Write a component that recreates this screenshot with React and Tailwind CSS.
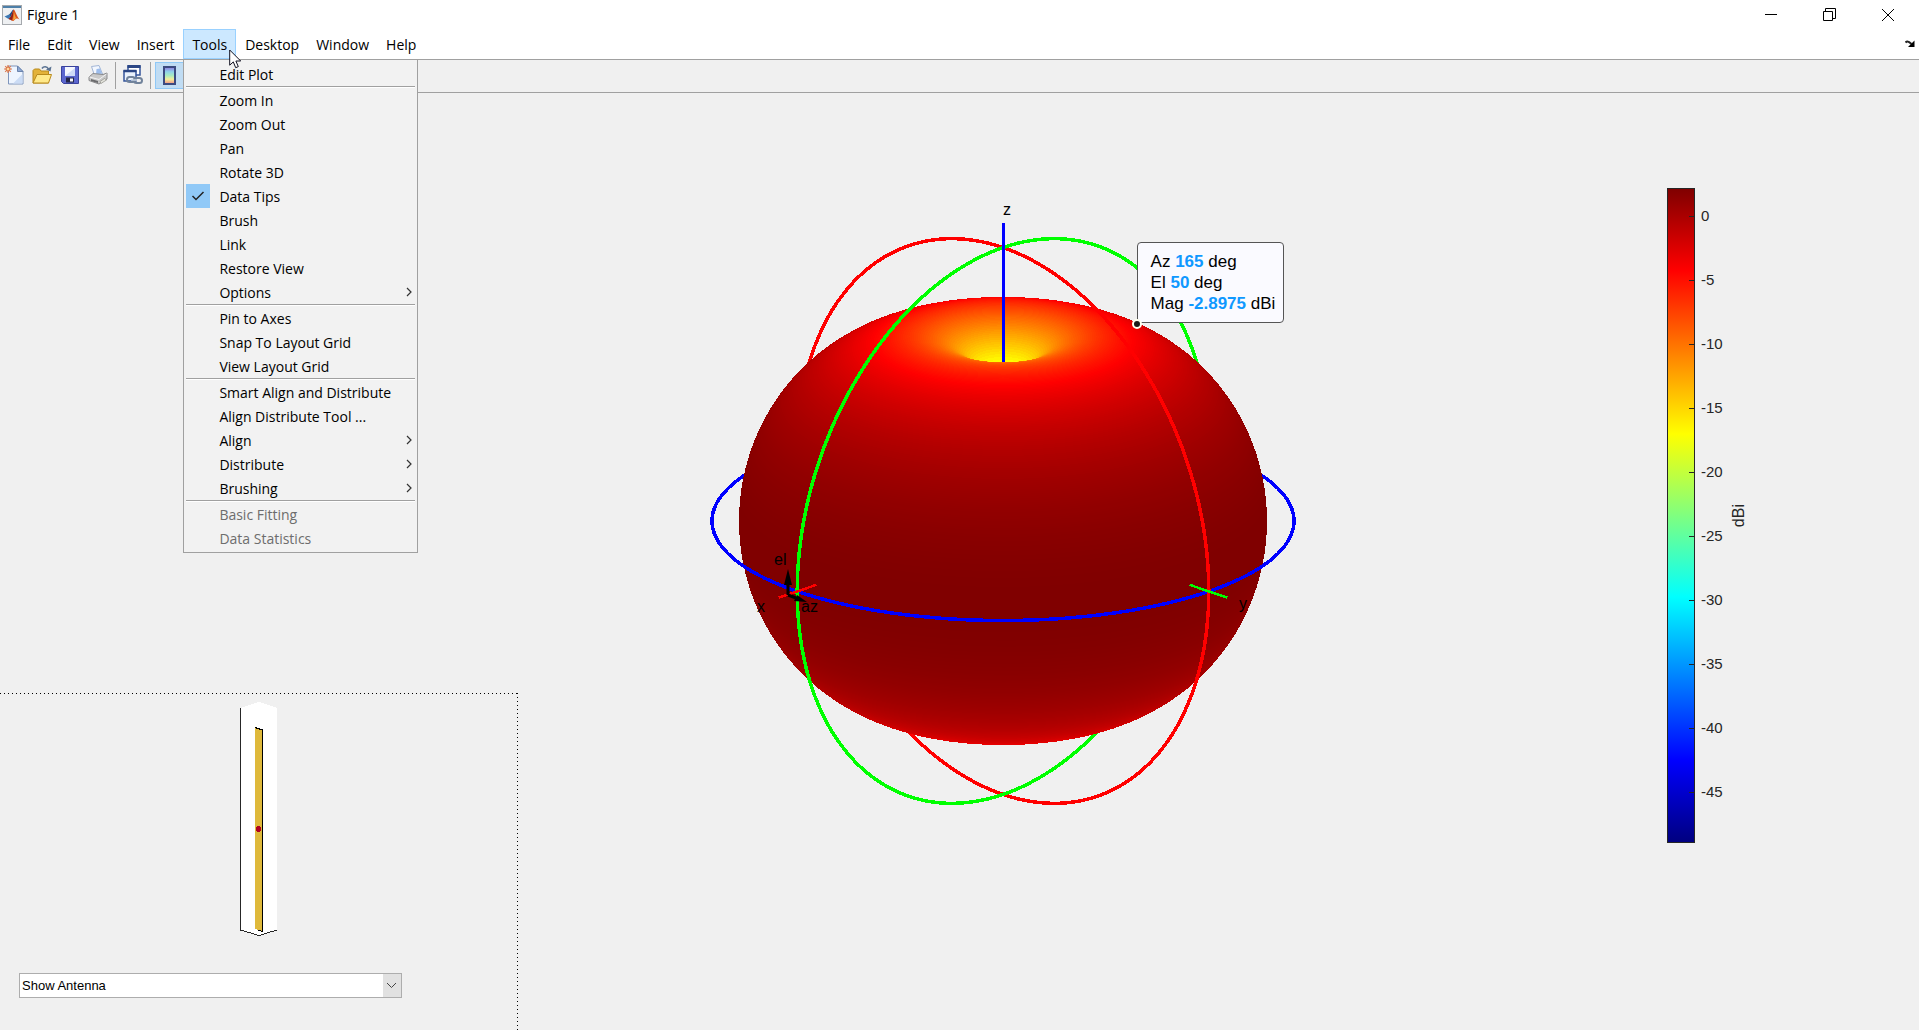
import React from "react";

/* ---------- radiation pattern geometry ---------- */
const CX = 300;
const CY = 320;
const RING = 291;
const AXIS = 317;
const BODY = 264;
const DB_MAX = 2.15;
const DB_MIN = -48.9;
const S20 = Math.sin(Math.PI / 9);
const C20 = Math.cos(Math.PI / 9);
const H = Math.SQRT1_2;

const project = (x, y, z, r) => [
  CX + r * H * (y - x),
  CY + r * (S20 * H * (x + y) - C20 * z),
];

const gain = (deg) => {
  const e = (deg * Math.PI) / 180;
  const f = Math.cos((Math.PI / 2) * Math.sin(e)) / Math.cos(e);
  return Math.max(DB_MIN, DB_MAX + 20 * Math.log10(Math.max(f, 1e-4)));
};

const jet = (v) => {
  const c = (m) =>
    Math.round(255 * Math.max(0, Math.min(1, 1.5 - Math.abs(4 * v - m))));
  return `rgb(${c(3)},${c(2)},${c(1)})`;
};

const level = (deg) => {
  const v = (gain(deg) - DB_MIN) / (DB_MAX - DB_MIN);
  const r = v * BODY;
  const e = (deg * Math.PI) / 180;
  const z = r * Math.sin(e);
  const rx = r * Math.cos(e);
  return { z, rx, ry: rx * S20, cy: CY - z * C20, fill: jet(v) };
};

const levels = [];
for (let d = -88; d <= 88; d += 0.5) levels.push(level(d));
const rim = levels.reduce((best, l, i) => (l.z > levels[best].z ? i : best), 0);
const shell = levels.slice(0, rim + 1);

const cavity = levels.slice(rim + 1).map((l, k) => {
  const above = levels.slice(rim, rim + 2 + k);
  const top = [];
  const bottom = [];
  for (let i = 0; i <= 80; i++) {
    const x = -l.rx * Math.cos((Math.PI * i) / 80);
    const back = l.cy - l.ry * Math.sqrt(Math.max(0, 1 - (x / l.rx) ** 2));
    let front = Infinity;
    for (const a of above) {
      const q = 1 - (x / a.rx) ** 2;
      front = Math.min(front, a.cy + a.ry * Math.sqrt(Math.max(0, q)));
    }
    if (front >= back) {
      top.push([CX + x, back]);
      bottom.unshift([CX + x, front]);
    }
  }
  return {
    fill: l.fill,
    points: [...top, ...bottom].map((p) => p.map((n) => n.toFixed(1)).join(",")).join(" "),
  };
});

const ring = (fn, frontOnly) => {
  let d = "";
  let open = false;
  for (let t = 0; t <= 720; t += 2) {
    const [x, y, z] = fn((t * Math.PI) / 180);
    const depth = C20 * H * (x + y) + S20 * z;
    if (!frontOnly && t > 360) break;
    if (!frontOnly || depth >= 0) {
      const [px, py] = project(x, y, z, RING);
      d += `${open ? "L" : "M"}${px.toFixed(1)} ${py.toFixed(1)}`;
      open = true;
    } else open = false;
  }
  return d;
};

const RINGS = [
  ["#0000ff", (t) => [Math.cos(t), Math.sin(t), 0]],
  ["#ff0000", (t) => [0, Math.cos(t), Math.sin(t)]],
  ["#00ff00", (t) => [Math.cos(t), 0, Math.sin(t)]],
];

const line = (a, b) => `M${a[0]} ${a[1]}L${b[0]} ${b[1]}`;

function Pattern() {
  return (
    <svg
      width="600"
      height="640"
      viewBox="0 0 600 640"
      className="shrink-0 font-['Liberation_Sans',sans-serif] text-base"
      role="img"
      aria-label="3D radiation pattern"
    >
      <g shapeRendering="crispEdges" fill="none" strokeWidth="3.500">
        {RINGS.map(([c, fn]) => (
          <path key={c} d={ring(fn, false)} stroke={c} />
        ))}
        {shell.map((l, i) => (
          <ellipse key={i} cx={CX} cy={l.cy} rx={l.rx} ry={l.ry} fill={l.fill} />
        ))}
        {cavity.map((c, i) => (
          <polygon key={i} points={c.points} fill={c.fill} />
        ))}
        {RINGS.map(([c, fn]) => (
          <path key={c} d={ring(fn, true)} stroke={c} />
        ))}
        <path d={`M${CX} ${CY - AXIS * C20}V161`} stroke="#0000ff" strokeWidth="3" />
        <path d={line(project(1, 0, 0, BODY), project(1, 0, 0, AXIS))} stroke="#ff0000" strokeWidth="2.500" />
        <path d={line(project(0, 1, 0, BODY), project(0, 1, 0, AXIS))} stroke="#00ff00" strokeWidth="2.500" />
      </g>
      <path d="M85 394V380M85 394L93 397" stroke="#000" strokeWidth="3" fill="none" />
      <path d="M85 368L89 384H81ZM104 401L91 400L94 394Z" />
      <text x="300" y="14">z</text>
      <text x="71" y="364">el</text>
      <text x="54" y="411">x</text>
      <text x="98" y="411">az</text>
      <text x="536" y="408">y</text>
    </svg>
  );
}

function DataTip() {
  return (
    <div className="absolute left-[434px] top-[41px] rounded-[4px] border border-[#555] bg-[#fafaff] py-2 pl-[13px] pr-2 font-['Liberation_Sans',sans-serif] text-[17px] leading-[21px] whitespace-nowrap">
      {[
        ["Az", "165", "deg"],
        ["El", "50", "deg"],
        ["Mag", "-2.8975", "dBi"],
      ].map(([k, v, u]) => (
        <p key={k}>
          {k} <b className="text-[#0f98ff]">{v}</b> {u}
        </p>
      ))}
      <i className="absolute -bottom-[7px] -left-[6px] size-[10px] rounded-full border-2 border-[#fffff0] bg-[#1a1a1a]" />
    </div>
  );
}

const TICKS = [0, -5, -10, -15, -20, -25, -30, -35, -40, -45];

function ColorBar() {
  return (
    <div className="mt-[95px] flex h-[655px] font-['Liberation_Sans',sans-serif] text-[#262626]">
      <div className="w-7 border border-[#262626] bg-[linear-gradient(to_bottom,#800000_0%,#ff0000_12.5%,#ffff00_37.5%,#00ffff_62.5%,#0000ff_87.5%,#000080_100%)] pt-[17px]">
        {TICKS.map((t) => (
          <div key={t} className="flex h-5 items-center justify-end not-last:mb-11">
            <span className="h-px w-[5px] bg-[#262626]" />
          </div>
        ))}
      </div>
      <div className="w-8 pl-[6px] pt-[18px] text-[15px] leading-5">
        {TICKS.map((t) => (
          <p key={t} className="not-last:mb-11">{t}</p>
        ))}
      </div>
      <p className="self-center text-base [writing-mode:vertical-rl] rotate-180">dBi</p>
    </div>
  );
}

function AntennaPanel() {
  return (
    <div className="flex">
      <div className="flex min-w-0 flex-1 flex-col">
        <div className="h-px bg-[repeating-linear-gradient(90deg,#000_0_1px,transparent_1px_4px)]" />
        <svg width="38" height="236" viewBox="0 0 38 236" className="mt-2 self-center" shapeRendering="crispEdges" role="img" aria-label="Dipole antenna">
          <path d="M0 6L19 0L37 6V228L19 234L0 228Z" fill="#fff" />
          <path d="M.5 6V228L19 233.500L37 228" fill="none" stroke="#262626" />
          <path d="M15 25L22 28V229L15 227Z" fill="#dfb93b" />
          <path d="M15 25.500L22.500 28V229.500L18 228" fill="none" stroke="#000" />
          <circle cx="18.500" cy="127" r="3" fill="#b00020" />
        </svg>
        <div className="relative mt-[35px] mb-8 ml-[19px] w-[74%]">
          <select aria-label="Antenna view" className="block h-[25px] w-full appearance-none border border-[#adadad] bg-white pl-[2px] font-['Liberation_Sans',sans-serif] text-[13px] text-black">
            <option>Show Antenna</option>
          </select>
          <span className="pointer-events-none absolute inset-y-px right-px flex w-[18px] items-center justify-center bg-[#e1e1e1]">
            <svg width="11" height="7" viewBox="0 0 11 7"><path d="M1 1L5.500 5.500L10 1" fill="none" stroke="#444" /></svg>
          </span>
        </div>
      </div>
      <div className="w-px bg-[repeating-linear-gradient(180deg,#000_0_1px,transparent_1px_4px)]" />
    </div>
  );
}

/* ---------- menus ---------- */
const MENUS = ["File", "Edit", "View", "Insert", "Tools", "Desktop", "Window", "Help"];
const GROUPS = [
  ["Edit Plot"],
  ["Zoom In", "Zoom Out", "Pan", "Rotate 3D", "Data Tips", "Brush", "Link", "Restore View", "Options"],
  ["Pin to Axes", "Snap To Layout Grid", "View Layout Grid"],
  ["Smart Align and Distribute", "Align Distribute Tool ...", "Align", "Distribute", "Brushing"],
  ["Basic Fitting", "Data Statistics"],
];
const SUBMENUS = ["Options", "Align", "Distribute", "Brushing"];
const DISABLED = ["Basic Fitting", "Data Statistics"];

function ToolsMenu() {
  return (
    <div role="menu" className="absolute -left-px top-[29px] z-10 w-[235px] border border-[#a0a0a0] bg-[#f2f2f2] p-[2px] text-black">
      {GROUPS.map((g, i) => (
        <div key={i} className={i ? "border-t border-[#a0a0a0]" : ""}>
          <div className={i ? "border-t border-white" : ""}>
            {g.map((label) => (
              <button
                key={label}
                role="menuitem"
                disabled={DISABLED.includes(label)}
                className="flex h-6 w-full items-center text-left whitespace-nowrap disabled:text-[#6d6d6d]"
              >
                <span className={label === "Data Tips" ? "flex size-6 items-center justify-center bg-[#91c9f7]" : "size-6"}>
                  {label === "Data Tips" && (
                    <svg width="14" height="12" viewBox="0 0 14 12"><path d="M1.500 6L5 9.500L12.500 2" fill="none" stroke="#222" strokeWidth="1.500" /></svg>
                  )}
                </span>
                <span className="flex-1 pl-[9px] pt-[2px]">{label}</span>
                {SUBMENUS.includes(label) && (
                  <svg width="6" height="10" viewBox="0 0 6 10" className="mr-[3px]"><path d="M1 1L5 5L1 9" fill="none" stroke="#333" strokeWidth="1.200" /></svg>
                )}
              </button>
            ))}
          </div>
        </div>
      ))}
    </div>
  );
}

function Cursor() {
  return (
    <svg width="13" height="20" viewBox="0 0 13 20" className="absolute left-[45px] top-[19px] z-20">
      <path d="M.7 1V16.200L4.300 12.900L6.700 18.700L9.300 17.600L6.900 12H11.700Z" fill="#fff" stroke="#101020" />
    </svg>
  );
}

/* ---------- toolbar icons ---------- */
function MatlabIcon() {
  return (
    <svg width="20" height="20" viewBox="0 0 20 20">
      <rect x=".5" y=".5" width="19" height="19" fill="#eef0f2" stroke="#a5a9ad" />
      <rect x="1" y="1" width="18" height="2" fill="#4d7fa8" />
      <path d="M2.500 11.500L7 9.500L9 11.500L6.500 14Z" fill="#3b78b5" />
      <path d="M7 9.500C9 8.500 10 5 11.500 4.500L9 12Z" fill="#1d4f86" />
      <path d="M6.500 14L9 11.500L11.500 4.500C13 4.500 14.500 11 17.500 14.500C15.500 13 14 13 12 15.500C10.500 17 9.500 15 8.500 14.500Z" fill="#d9541e" />
      <path d="M11.500 4.500C11.500 8 11 13 9.500 15.500C9 15 8.500 14.500 6.500 14L9 11.500Z" fill="#8c1f1a" />
      <path d="M11.700 6C12.500 9 13 12 14.500 13.200C13 13.500 12 15 11 15.700C11.500 12 12 9 11.700 6Z" fill="#f5a53a" />
    </svg>
  );
}
function NewIcon() {
  return (
    <svg width="20" height="20" viewBox="0 0 20 20">
      <path d="M4.500 1H13.500L19 6.500V19H4.500Z" fill="#eef5ff" stroke="#7f95bb" />
      <path d="M9 18.500L18.500 9V18.500Z" fill="#cbdcf5" />
      <path d="M13.500 1V6.500H19Z" fill="#8fa9d4" stroke="#6a83ad" />
      <path d="M4 0V8M0 4H8M1.200 1.200L6.800 6.800M6.800 1.200L1.200 6.800" stroke="#dd7a50" strokeWidth="1.200" />
      <circle cx="4" cy="4" r="2" fill="#ffd9a0" stroke="#d96c3c" />
    </svg>
  );
}
function OpenIcon() {
  return (
    <svg width="20" height="20" viewBox="0 0 20 20">
      <path d="M1 18V5.500L2.500 4H7.500L9 6H16.500V18Z" fill="#e3b23a" stroke="#b98a1c" />
      <path d="M10 3.500C11.500 1 15 1 16.500 4" fill="none" stroke="#5b7392" strokeWidth="1.600" />
      <path d="M19.500 1.500L18.500 6.500L14 4.500Z" fill="#5b7392" />
      <path d="M1 18L5 9.500H19.500L16.500 18Z" fill="#ffe98a" stroke="#b98a1c" />
    </svg>
  );
}
function SaveIcon() {
  return (
    <svg width="20" height="20" viewBox="0 0 20 20">
      <path d="M1.500 1.500H18.500V18.500H3.500L1.500 16.500Z" fill="#5b66cf" stroke="#3a429c" />
      <rect x="5" y="2" width="10" height="9" fill="#f4f7ff" />
      <path d="M5 11L15 3V11Z" fill="#cfdaf7" />
      <rect x="6" y="12.500" width="8" height="5" fill="#23264a" />
      <rect x="10" y="13.500" width="3" height="3" fill="#f4f4f8" />
    </svg>
  );
}
function PrintIcon() {
  return (
    <svg width="20" height="20" viewBox="0 0 20 20">
      <path d="M3.500 1.500L11 .5L14.500 9L6.500 10.500Z" fill="#f2f7ff" stroke="#a3b6d6" />
      <path d="M8.500 4L12 3.500L14 8.500L8 9.500Z" fill="#9dbdec" />
      <path d="M1 12L5 8.500L15 9.500L19 8V14L11 19L1 15.500Z" fill="#c9c9c9" stroke="#8a8a8c" />
      <path d="M1.500 12L11 14.500L18.500 9" fill="none" stroke="#f3f3f3" />
      <path d="M3 14L10 16V18L3 16Z" fill="#6a6a6c" />
      <path d="M12 16.500L16.500 13.500L18.500 15L13 18.500Z" fill="#e3e3dc" stroke="#77776f" strokeWidth=".5" />
    </svg>
  );
}
function LinkIcon() {
  return (
    <svg width="20" height="20" viewBox="0 0 20 20">
      <path d="M5 1H17V10H5Z" fill="#fff" stroke="#34549a" strokeWidth="1.500" />
      <path d="M4.500 1.500H17.500" stroke="#2b4685" strokeWidth="3" />
      <path d="M1 6H13V16H1Z" fill="#e9f1fc" stroke="#34549a" strokeWidth="1.500" />
      <path d="M.5 6H13.500" stroke="#2b4685" strokeWidth="2.500" />
      <g fill="none" stroke="#71839b" strokeWidth="2">
        <rect x="4" y="12" width="8" height="5" rx="2.500" />
        <rect x="11" y="13" width="8" height="5" rx="2.500" />
      </g>
      <path d="M8 15H14" stroke="#c7d3e2" strokeWidth="1.500" />
    </svg>
  );
}

const TOOLS = [
  ["New Figure", NewIcon],
  ["Open File", OpenIcon],
  ["Save Figure", SaveIcon],
  ["Print Figure", PrintIcon],
];

export default function App() {
  return (
    <div className="flex min-h-screen flex-col bg-[#f0f0f0] font-['Open_Sans','Noto_Sans',sans-serif] text-[14px] leading-5 text-black">
      <header className="flex h-[29px] items-center bg-white pl-[2px]">
        <MatlabIcon />
        <h1 className="flex-1 pl-[5px]">Figure 1</h1>
        <div className="flex items-center gap-[46px] pr-[25px]">
          <button aria-label="Minimize" className="flex size-3 items-center"><span className="h-px w-3 bg-black" /></button>
          <button aria-label="Restore">
            <svg width="13" height="13" viewBox="0 0 13 13" fill="none" stroke="#000"><path d="M.5 3.500H9.500V12.500H.5ZM2.500 3V.5H12.500V10.500H10" /></svg>
          </button>
          <button aria-label="Close">
            <svg width="12" height="12" viewBox="0 0 12 12" stroke="#000"><path d="M0 0L12 12M12 0L0 12" /></svg>
          </button>
        </div>
      </header>

      <nav className="flex h-[30px] items-stretch gap-px bg-white">
        {MENUS.map((m) =>
          m === "Tools" ? (
            <div key={m} className="relative border border-[#99d1ff] bg-[#cce8ff]">
              <button className="h-full px-2 pt-px">{m}</button>
              <ToolsMenu />
              <Cursor />
            </div>
          ) : (
            <button key={m} className="px-2 pt-px">{m}</button>
          )
        )}
        <button aria-label="Dock figure" className="ml-auto pr-1">
          <svg width="10" height="8" viewBox="0 0 10 8"><path d="M.5 2.500C2.500 .5 4.500 2 6.500 4" fill="none" stroke="#222" strokeWidth="2" /><path d="M9.500 .5V7H3Z" fill="#000" /></svg>
        </button>
      </nav>

      <div className="flex h-[34px] items-center border-y border-[#a0a0a0] pb-[2px] pl-1">
        <div className="flex gap-2">
          {TOOLS.map(([label, Icon]) => (
            <button key={label} aria-label={label}><Icon /></button>
          ))}
        </div>
        <span className="mx-[7px] h-[27px] w-px bg-[#a0a0a0]" />
        <button aria-label="Link Plot"><LinkIcon /></button>
        <span className="ml-[7px] mr-1 h-[27px] w-px bg-[#a0a0a0]" />
        <button aria-label="Insert Colorbar" className="flex h-[27px] w-[29px] items-center justify-center border border-[#90c8f6] bg-[#c0dcf3]">
          <span className="h-[19px] w-[13px] border-2 border-[#3c4a80] bg-[linear-gradient(to_bottom,#8f86e0,#8fd3ea,#a8ebc0,#f3ee9a,#f0a088)]" />
        </button>
      </div>

      <main className="flex flex-1">
        <aside className="flex w-[27%] flex-col justify-end">
          <AntennaPanel />
        </aside>
        <section className="flex flex-1 items-center justify-center pb-[82px]">
          <div className="relative">
            <Pattern />
            <DataTip />
          </div>
        </section>
        <aside className="w-[432px] pl-[180px]">
          <ColorBar />
        </aside>
      </main>
    </div>
  );
}
